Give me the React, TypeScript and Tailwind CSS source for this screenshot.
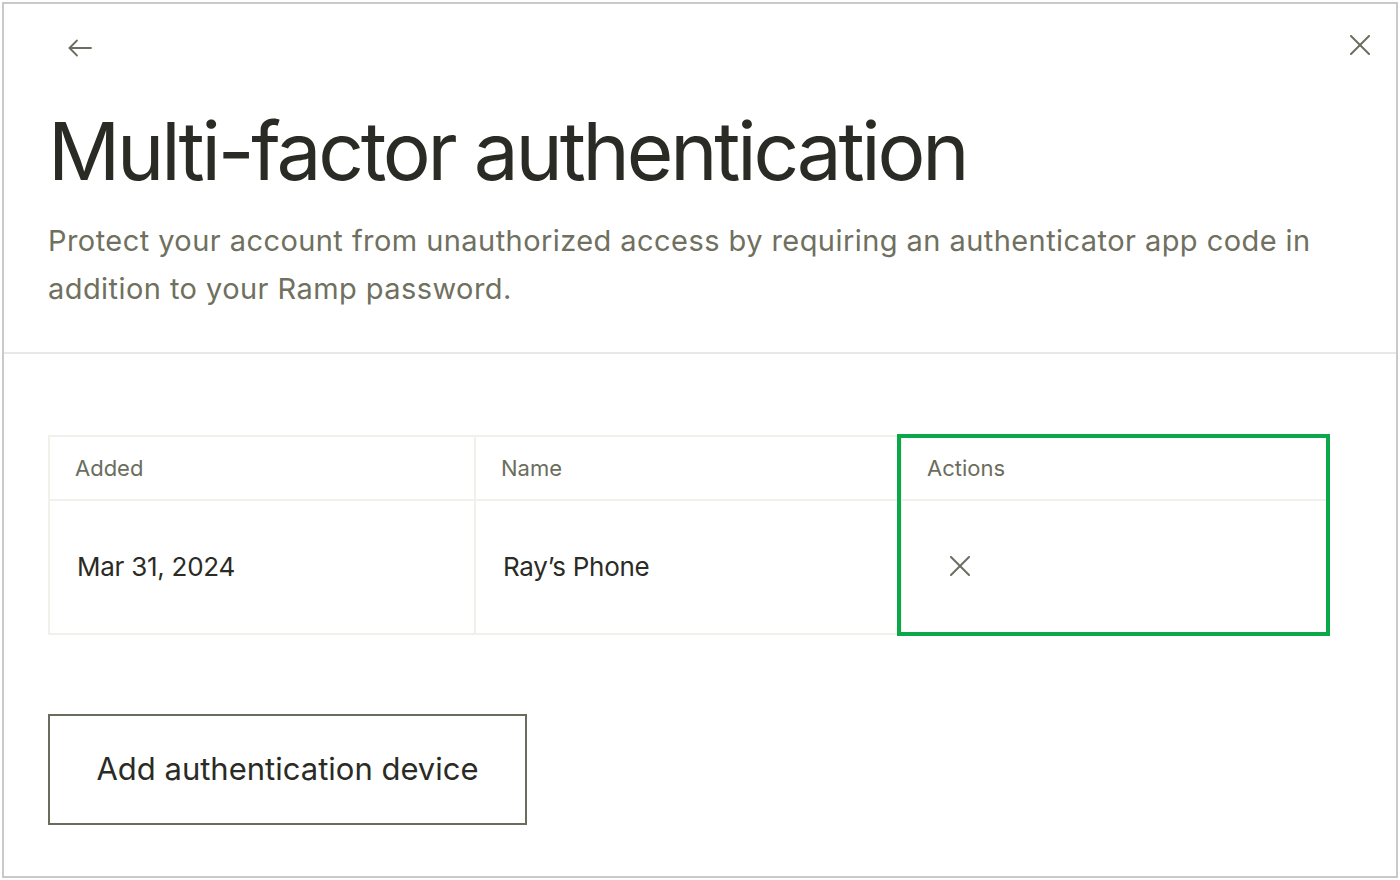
import React from "react";

function ArrowLeft() {
  return (
    <svg width="24" height="24" viewBox="0 0 24 24" fill="none" stroke="#6b6d5e" strokeWidth="1.8" strokeLinecap="round" strokeLinejoin="round">
      <path d="M23 12H1.5" />
      <path d="M9 4.5L1.5 12 9 19.5" />
    </svg>
  );
}

function Cross({ size = 20 }: { size?: number }) {
  return (
    <svg width={size} height={size} viewBox="0 0 20 20" fill="none" stroke="#6b6d5e" strokeWidth="2" strokeLinecap="round">
      <path d="M1 1l18 18" />
      <path d="M19 1L1 19" />
    </svg>
  );
}

const rows = [{ added: "Mar 31, 2024", name: "Ray\u2019s Phone" }];

export default function App() {
  return (
    <div className="w-full h-[880px] p-[2px] bg-white" style={{ fontFamily: "Inter, 'Liberation Sans', sans-serif" }}>
      <div className="h-[876px] w-[1396px] border-2 border-[#c9c9c9] bg-white flex flex-col">
        <div className="pb-[39px] border-b-2 border-[#e9e8e4]">
          <div className="flex items-start justify-between h-[99px] pl-[64px] pr-[26px] pt-[31px]">
            <button className="mt-[1px]">
              <ArrowLeft />
            </button>
            <button>
              <Cross />
            </button>
          </div>
          <div className="px-[44px]">
            <h1 className="text-[80px] leading-[96px] tracking-[-0.04em] text-[#2b2b25] font-normal">
              Multi-factor authentication
            </h1>
            <p className="mt-[18px] text-[29px] leading-[48px] text-[#70705f] max-w-[1290px] tracking-[0.015em]">
              Protect your account from unauthorized access by requiring an authenticator app code in addition to your Ramp password.
            </p>
          </div>
        </div>

        <div className="px-[44px] pt-[81px]">
          <div className="relative w-[1282px] border-2 border-[#f1f0eb]">
            <div className="grid grid-cols-3 h-[64px] border-b-2 border-[#f1f0eb]">
              {["Added", "Name", "Actions"].map((h, i) => (
                <div
                  key={h}
                  className={`flex items-center px-[25px] text-[22px] text-[#6b6d5e] ${i < 2 ? "border-r-2 border-[#f1f0eb]" : ""}`}
                >
                  {h}
                </div>
              ))}
            </div>
            {rows.map((r) => (
              <div key={r.name} className="grid grid-cols-3 h-[132px]">
                <div className="flex items-center px-[27px] pb-[2px] text-[26px] text-[#2b2b25] border-r-2 border-[#f1f0eb] tracking-[-0.01em]">
                  {r.added}
                </div>
                <div className="flex items-center px-[27px] pb-[2px] text-[26px] text-[#2b2b25] border-r-2 border-[#f1f0eb] tracking-[-0.01em]">
                  {r.name}
                </div>
                <div className="flex items-center pl-[48px] pb-[2px]">
                  <button>
                    <Cross />
                  </button>
                </div>
              </div>
            ))}
            <div className="absolute top-[-3px] bottom-[-3px] right-[-2px] w-[433px] border-4 border-[#0aa848] pointer-events-none" />
          </div>

          <button className="mt-[79px] w-[479px] h-[111px] border-2 border-[#6b6b5e] text-[31px] text-[#2b2b25]">
            Add authentication device
          </button>
        </div>
      </div>
    </div>
  );
}
